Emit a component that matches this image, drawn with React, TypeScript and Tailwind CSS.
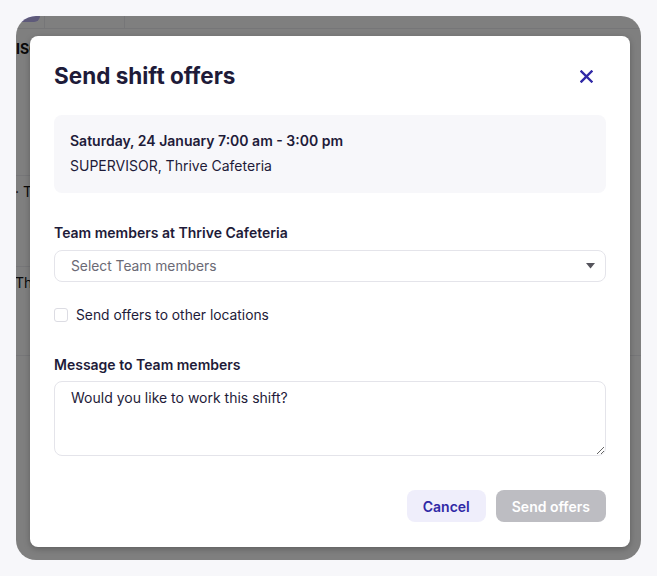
import React from 'react';

const ink = 'text-[#1e1b39]';

function Underlay() {
  return (
    <div className="flex h-full w-full flex-col bg-white text-[#111]">
      {/* top bar of the page behind the dialog */}
      <div className="flex h-[13px] border-b border-[#ececf0]">
        <div className="h-[6px] w-[24px] rounded-br-[6px] bg-[#bcb4f5]" />
        <div className="w-[4px]" />
        <div className="h-full w-[81px] border-x border-[#ececf0]" />
      </div>
      <div className="mt-[10px] whitespace-nowrap text-[14px] font-bold leading-[20px]">ISOR</div>
      <div className="mt-[116px] h-px w-[40px] bg-[#ececf0]" />
      <div className="-ml-[1px] mt-[6px] whitespace-nowrap text-[14px] leading-[20px]">· Thrive</div>
      <div className="mt-[64px] h-px w-[40px] bg-[#ececf0]" />
      <div className="-ml-[1px] mt-[6px] whitespace-nowrap text-[14px] leading-[20px]">Thrive</div>
      <div className="mt-[62px] h-px w-full bg-[#ececf0]" />
    </div>
  );
}

function ShiftOffersDialog() {
  return (
    <div className="flex w-[600px] flex-col rounded-[8px] bg-white px-6 pb-[25px] pt-6 shadow-[0_2px_6px_rgba(0,0,0,0.25)]">
      <div className="mb-[23px] flex h-8 items-center justify-between">
        <h2 className={`text-[22.5px] font-bold leading-8 ${ink}`}>Send shift offers</h2>
        <button className="mr-[12px] flex h-4 w-4 items-center justify-center text-[#3029a6]">
          <svg width="13" height="13" viewBox="0 0 13 13" fill="none">
            <path d="M1.5 1.5l10 10M11.5 1.5l-10 10" stroke="currentColor" strokeWidth="2.4" strokeLinecap="square" />
          </svg>
        </button>
      </div>

      <div className={`rounded-[8px] bg-[#f7f7fa] px-4 pb-[17px] pt-4 text-[14px] leading-5 ${ink}`}>
        <div className="font-semibold">Saturday, 24 January 7:00 am - 3:00 pm</div>
        <div className="mt-[5px]">SUPERVISOR, Thrive Cafeteria</div>
      </div>

      <label className={`mt-[30px] text-[14px] font-semibold leading-5 ${ink}`}>Team members at Thrive Cafeteria</label>
      <div className="mt-[7px] flex h-8 items-center justify-between rounded-[8px] border border-[#e4e4ea] pl-4 pr-[10px]">
        <span className="text-[13.8px] text-[#6b6a75]">Select Team members</span>
        <svg width="9" height="6" viewBox="0 0 9 6">
          <path d="M0 0h9L4.5 5.5z" fill="#55545c" />
        </svg>
      </div>

      <div className="mt-[23px] flex h-5 items-center gap-2">
        <span className="h-[14px] w-[14px] rounded-[3px] border border-[#dcdce3] bg-white" />
        <span className={`text-[13.8px] ${ink}`}>Send offers to other locations</span>
      </div>

      <label className={`mt-[30px] text-[14px] font-semibold leading-5 ${ink}`}>Message to Team members</label>
      <textarea
        defaultValue="Would you like to work this shift?"
        className={`mt-[6px] h-[75px] resize-y rounded-[8px] border border-[#e4e4ea] px-4 pt-[6px] text-[14px] leading-5 outline-none ${ink}`}
      />

      <div className="mt-[34px] flex justify-end gap-[10px]">
        <button className="h-8 rounded-[8px] bg-[#efeefb] px-4 text-[14px] font-semibold text-[#3029a6]">Cancel</button>
        <button className="h-8 rounded-[8px] bg-[#bdbdc2] px-4 text-[14px] font-semibold text-white">Send offers</button>
      </div>
    </div>
  );
}

export default function App() {
  return (
    <div className="min-h-[576px] w-[657px] bg-[#f7f7fa] p-4 font-['Inter',sans-serif]">
      <div className="relative h-[544px] w-[625px] overflow-hidden rounded-[20px]">
        <Underlay />
        <div className="absolute inset-0 bg-black/50 pl-[14px] pt-[20px]">
          <ShiftOffersDialog />
        </div>
      </div>
    </div>
  );
}
